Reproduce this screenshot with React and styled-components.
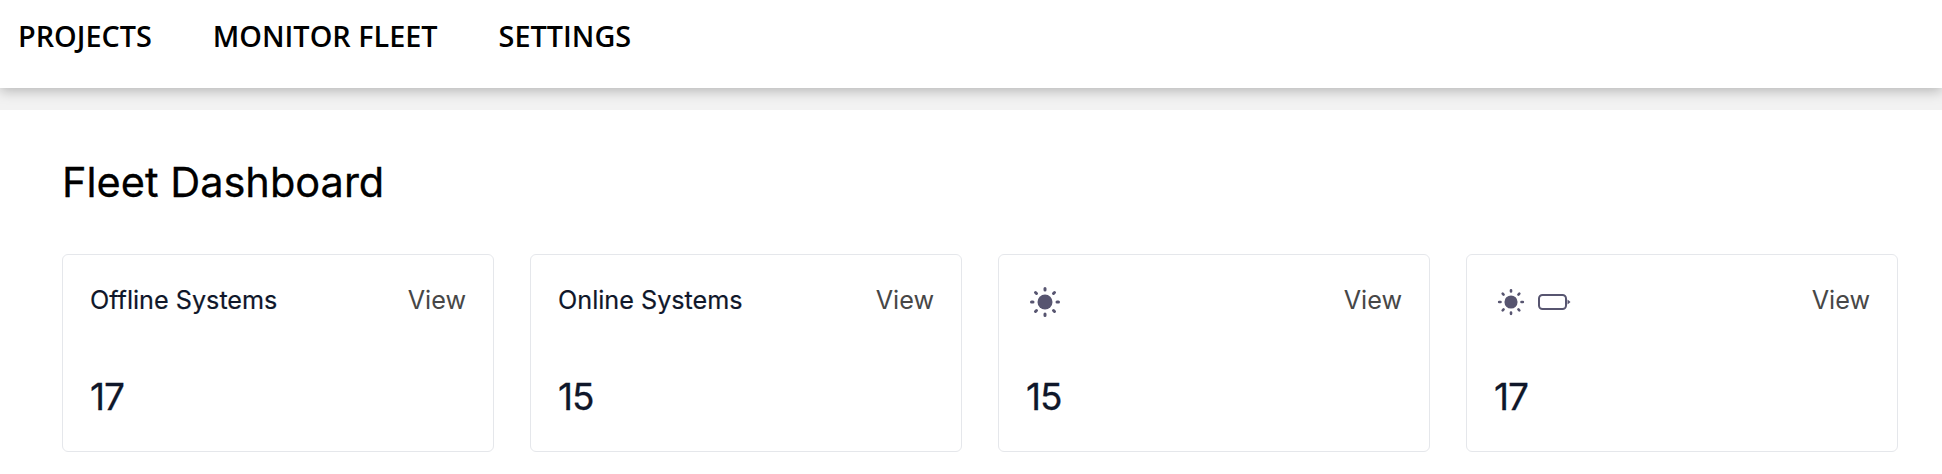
import React from "react";
import styled, { createGlobalStyle } from "styled-components";

const Global = createGlobalStyle`
  html, body { margin: 0; padding: 0; background: #fff; }
  body { font-family: "Inter", "Liberation Sans", sans-serif; overflow: hidden; }
`;
const Page = styled.div`
  width: 1942px;
  height: 474px;
  overflow: hidden;
  background: #fff;
`;
const NavWrap = styled.div`
  height: 110px;
  background: #f2f2f2;
  overflow: hidden;
`;
const Nav = styled.nav`
  height: 88px;
  background: #fff;
  display: flex;
  align-items: flex-start;
  gap: 61px;
  padding: 16px 0 0 18px;
  box-sizing: border-box;
  box-shadow: 0 3px 12px rgba(0, 0, 0, 0.25);
`;
const NavLink = styled.a`
  font-family: "Open Sans", sans-serif;
  font-weight: 600;
  font-size: 28.8px;
  line-height: 39px;
  color: #000;
  text-transform: uppercase;
`;
const Main = styled.main`
  padding: 48px 44px 0 62px;
`;
const Title = styled.h1`
  margin: 0 0 48px;
  font-weight: 400;
  font-size: 41.5px;
  line-height: 48px;
  color: #000;
  -webkit-text-stroke: 0.3px #000;
`;
const Grid = styled.div`
  display: grid;
  grid-template-columns: repeat(4, 432px);
  gap: 36px;
`;
const Card = styled.section`
  height: 198px;
  box-sizing: border-box;
  border: 1px solid #e5e7eb;
  border-radius: 6px;
  padding: 29px 27px 0;
  display: flex;
  flex-direction: column;
`;
const CardHead = styled.div`
  display: flex;
  justify-content: space-between;
  align-items: center;
  height: 32px;
`;
const CardTitle = styled.span`
  font-size: 25.2px;
  font-weight: 400;
  color: #0f172a;
  -webkit-text-stroke: 0.2px #0f172a;
`;
const ViewLink = styled.a`
  font-size: 25.2px;
  color: #474747;
`;
const Icons = styled.span`
  display: flex;
  align-items: center;
  gap: 13px;
  margin: 3px 0 0 3px;
`;
const Value = styled.div`
  margin-top: 57px;
  font-size: 37px;
  font-weight: 400;
  letter-spacing: -1px;
  line-height: 48px;
  color: #0f172a;
  -webkit-text-stroke: 0.3px #0f172a;
`;

const Sun = ({ size }) => (
  <svg width={size} height={size} viewBox="0 0 32 32" fill="#575570" stroke="#575570" strokeWidth="3" strokeLinecap="round">
    <circle cx="16" cy="16" r="7.5" stroke="none" />
    <path d="M16 2.5v1.5M16 28v1.5M2.5 16H4M28 16h1.5M6.5 6.5l1 1M24.5 24.5l1 1M6.5 25.5l1-1M24.5 7.5l1-1" />
  </svg>
);
const Battery = () => (
  <svg width="34" height="16" viewBox="0 0 34 16" fill="none">
    <rect x="1" y="1" width="27" height="14" rx="3.5" stroke="#575570" strokeWidth="2" />
    <path d="M29.5 5.5l3 2.5-3 2.5z" fill="#575570" />
  </svg>
);

const cards = [
  { title: "Offline Systems", value: 17 },
  { title: "Online Systems", value: 15 },
  { icons: <Sun size={32} />, value: 15 },
  { icons: <><Sun size={28} /><Battery /></>, value: 17 },
];

export default function App() {
  return (
    <Page>
      <Global />
      <NavWrap>
        <Nav>
          <NavLink>Projects</NavLink>
          <NavLink>Monitor Fleet</NavLink>
          <NavLink>Settings</NavLink>
        </Nav>
      </NavWrap>
      <Main>
        <Title>Fleet Dashboard</Title>
        <Grid>
          {cards.map((c, i) => (
            <Card key={i}>
              <CardHead>
                {c.title ? <CardTitle>{c.title}</CardTitle> : <Icons>{c.icons}</Icons>}
                <ViewLink>View</ViewLink>
              </CardHead>
              <Value>{c.value}</Value>
            </Card>
          ))}
        </Grid>
      </Main>
    </Page>
  );
}
